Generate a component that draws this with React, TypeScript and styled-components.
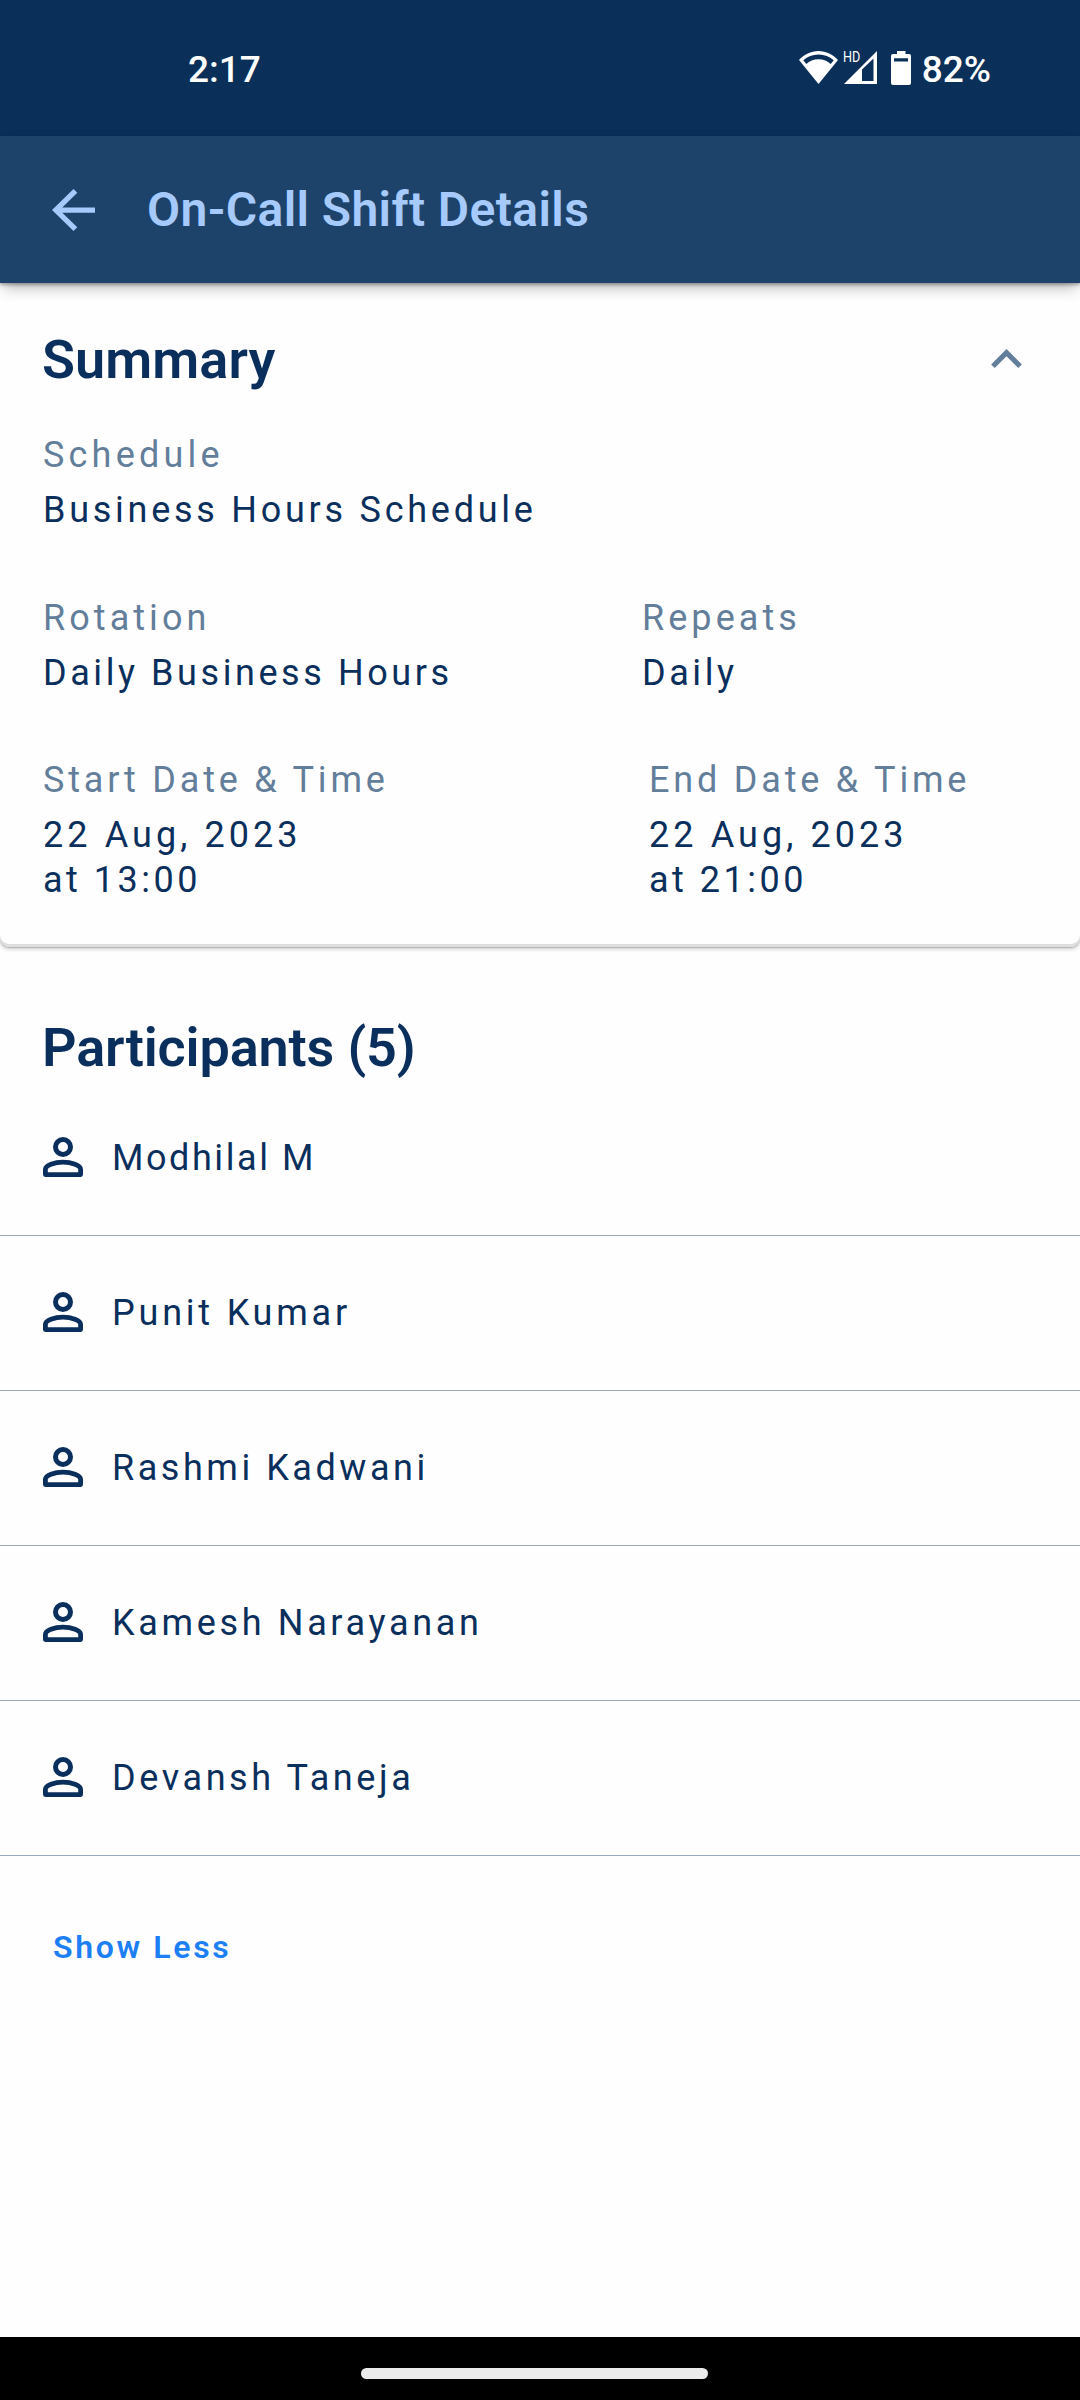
import React from "react";
import styled, { createGlobalStyle } from "styled-components";

const navy = "#0a2f5c";
const slate = "#637e9b";

const GlobalStyle = createGlobalStyle`
  * { box-sizing: border-box; }
  body { margin: 0; background: #fefefe; font-family: Roboto, sans-serif; }
`;

const Screen = styled.div`
  width: 1080px;
  height: 2400px;
  display: flex;
  flex-direction: column;
  background: #fefefe;
  color: ${navy};
  overflow: hidden;
`;

const StatusBar = styled.header`
  flex: none;
  height: 136px;
  padding: 3px 89px 0 188px;
  display: flex;
  align-items: center;
  justify-content: space-between;
  background: #0a2f59;
  color: #fff;
  font-size: 37px;
  font-weight: 500;
`;

const StatusIcons = styled.div`
  display: flex;
  align-items: center;

  svg { display: block; margin-top: -4px; }
`;

const Signal = styled.div`
  position: relative;
  margin: 0 14px 0 6px;
`;

const SignalBadge = styled.span`
  position: absolute;
  left: -1px;
  top: -5px;
  font-size: 14px;
  line-height: 14px;
  font-weight: 400;
  transform: scaleX(0.9);
  transform-origin: left;
`;

const BatteryLevel = styled.span`
  margin-left: 11px;
`;

const AppBar = styled.nav`
  flex: none;
  position: relative;
  z-index: 1;
  height: 147px;
  padding-left: 52px;
  display: flex;
  align-items: center;
  gap: 52px;
  background: #1e436b;
  color: #a6cafc;
  box-shadow: 0 2px 3px rgba(0, 0, 0, 0.28), 0 7px 14px -3px rgba(0, 0, 0, 0.3);
`;

const Title = styled.h1`
  margin: 0;
  font-size: 48px;
  font-weight: 600;
  letter-spacing: 0.4px;
`;

const SummaryCard = styled.section`
  flex: none;
  height: 664px;
  padding: 45px 57px 0 43px;
  border-radius: 0 0 9px 9px;
  background: #fefefe;
  box-shadow: inset 0 -3px 0 #dedede, 0 1px 1px #b4b4b4, 0 2px 4px rgba(0, 0, 0, 0.2);
`;

const SummaryHeader = styled.div`
  display: flex;
  align-items: center;
  justify-content: space-between;
  margin: 0 0 41px -1px;

  svg { display: block; margin-right: 1px; margin-top: -3px; }
`;

const Heading = styled.h2<{ $height: number; $spacing?: number }>`
  margin: 0;
  font-size: 54px;
  line-height: ${(p) => p.$height}px;
  font-weight: 600;
  letter-spacing: ${(p) => p.$spacing ?? 0}px;
`;

const FieldRow = styled.div<{ $first: number; $gap?: number }>`
  display: grid;
  grid-template-columns: ${(p) => p.$first}px 1fr;
  margin-bottom: ${(p) => p.$gap ?? 0}px;
`;

const Field = styled.div`
  display: flex;
  flex-direction: column;
  gap: 10px;
`;

const Text = styled.span<{ $spacing: number; $muted?: boolean }>`
  display: block;
  font-size: 36px;
  line-height: 45px;
  white-space: nowrap;
  letter-spacing: ${(p) => p.$spacing}px;
  color: ${(p) => (p.$muted ? slate : navy)};
`;

const Participants = styled.section`
  flex: 1;
  padding-top: 68px;
`;

const ParticipantsHeader = styled.div`
  padding-left: 42px;
`;

const ParticipantRow = styled.div`
  height: 155px;
  padding-left: 43px;
  display: flex;
  align-items: center;
  gap: 29px;
  border-bottom: 1px solid #9aabbf;

  svg { display: block; margin-bottom: 2px; }
`;

const ShowLess = styled.button`
  display: block;
  margin: 71px 0 0 53px;
  padding: 0;
  border: 0;
  background: none;
  color: #1d7ff5;
  font: 600 32px/40px Roboto, sans-serif;
  letter-spacing: 2.65px;
`;

const NavigationBar = styled.footer`
  flex: none;
  height: 63px;
  padding: 31px 0 0 361px;
  background: #000;
`;

const HomePill = styled.div`
  width: 347px;
  height: 11px;
  border-radius: 6px;
  background: #ebebeb;
`;

const WifiIcon = () => (
  <svg width="39" height="33" viewBox="0 0 39 33">
    <path
      fill="#fff"
      fillRule="evenodd"
      d="M0 9C5 3.5 12 0 19.500 0S34 3.500 39 9L19.500 33ZM4.300 9.300L7.300 13C10.500 10 14.500 8.300 19.500 8.300S28.500 10 31.700 13L34.700 9.300C30.500 5.700 25.500 3.600 19.500 3.600S8.500 5.700 4.300 9.300Z"
    />
  </svg>
);

const SignalIcon = () => (
  <svg width="33" height="33" viewBox="0 0 33 33">
    <path fill="#fff" fillRule="evenodd" d="M0 33H33V0ZM18 18.500L29.500 7.500V30H18Z" />
  </svg>
);

const BatteryIcon = () => (
  <svg width="20" height="34" viewBox="0 0 20 34">
    <path
      fill="#fff"
      fillRule="evenodd"
      d="M6 0H14.500V3H18A2 2 0 0 1 20 5V32A2 2 0 0 1 18 34H2A2 2 0 0 1 0 32V5A2 2 0 0 1 2 3H6ZM3 7.200V10.600H17V7.200Z"
    />
  </svg>
);

const BackIcon = () => (
  <svg width="43" height="42" viewBox="4 4 16 16" preserveAspectRatio="none">
    <path fill="currentColor" d="M20 11H7.830l5.590-5.590L12 4l-8 8 8 8 1.410-1.410L7.830 13H20v-2z" />
  </svg>
);

const CollapseIcon = () => (
  <svg width="31" height="19" viewBox="6 8 12 7.410">
    <path fill={slate} d="M12 8l-6 6 1.410 1.410L12 10.830l4.590 4.580L18 14z" />
  </svg>
);

const PersonIcon = () => (
  <svg width="40" height="40" viewBox="0 0 40 40" fill="none" stroke={navy}>
    <circle cx="20" cy="10" r="7.500" strokeWidth="5" />
    <path
      strokeWidth="4.800"
      strokeLinejoin="round"
      d="M2.400 37.600V32.500C2.400 28.500 11.500 25.200 20 25.200S37.600 28.500 37.600 32.500V37.600Z"
    />
  </svg>
);

const participants = [
  { name: "Modhilal M", spacing: 2.57 },
  { name: "Punit Kumar", spacing: 3.79 },
  { name: "Rashmi Kadwani", spacing: 3.54 },
  { name: "Kamesh Narayanan", spacing: 3.66 },
  { name: "Devansh Taneja", spacing: 3.6 },
];

export default function App() {
  return (
    <Screen>
      <GlobalStyle />
      <StatusBar>
        <span>2:17</span>
        <StatusIcons>
          <WifiIcon />
          <Signal>
            <SignalIcon />
            <SignalBadge>HD</SignalBadge>
          </Signal>
          <BatteryIcon />
          <BatteryLevel>82%</BatteryLevel>
        </StatusIcons>
      </StatusBar>
      <AppBar>
        <BackIcon />
        <Title>On-Call Shift Details</Title>
      </AppBar>
      <SummaryCard>
        <SummaryHeader>
          <Heading $height={64} $spacing={0.1}>Summary</Heading>
          <CollapseIcon />
        </SummaryHeader>
        <FieldRow $first={599} $gap={63}>
          <Field>
            <Text $muted $spacing={4.2}>Schedule</Text>
            <Text $spacing={3.74}>Business Hours Schedule</Text>
          </Field>
        </FieldRow>
        <FieldRow $first={599} $gap={62}>
          <Field>
            <Text $muted $spacing={4.05}>Rotation</Text>
            <Text $spacing={3.57}>Daily Business Hours</Text>
          </Field>
          <Field>
            <Text $muted $spacing={4.05}>Repeats</Text>
            <Text $spacing={3.57}>Daily</Text>
          </Field>
        </FieldRow>
        <FieldRow $first={606}>
          <Field>
            <Text $muted $spacing={3.8}>Start Date &amp; Time</Text>
            <div>
              <Text $spacing={4.08}>22 Aug, 2023</Text>
              <Text $spacing={3.5}>at 13:00</Text>
            </div>
          </Field>
          <Field>
            <Text $muted $spacing={3.81}>End Date &amp; Time</Text>
            <div>
              <Text $spacing={4.08}>22 Aug, 2023</Text>
              <Text $spacing={3.5}>at 21:00</Text>
            </div>
          </Field>
        </FieldRow>
      </SummaryCard>
      <Participants>
        <ParticipantsHeader>
          <Heading $height={66} $spacing={-0.15}>Participants (5)</Heading>
        </ParticipantsHeader>
        {participants.map((p) => (
          <ParticipantRow key={p.name}>
            <PersonIcon />
            <Text $spacing={p.spacing}>{p.name}</Text>
          </ParticipantRow>
        ))}
        <ShowLess>Show Less</ShowLess>
      </Participants>
      <NavigationBar>
        <HomePill />
      </NavigationBar>
    </Screen>
  );
}
